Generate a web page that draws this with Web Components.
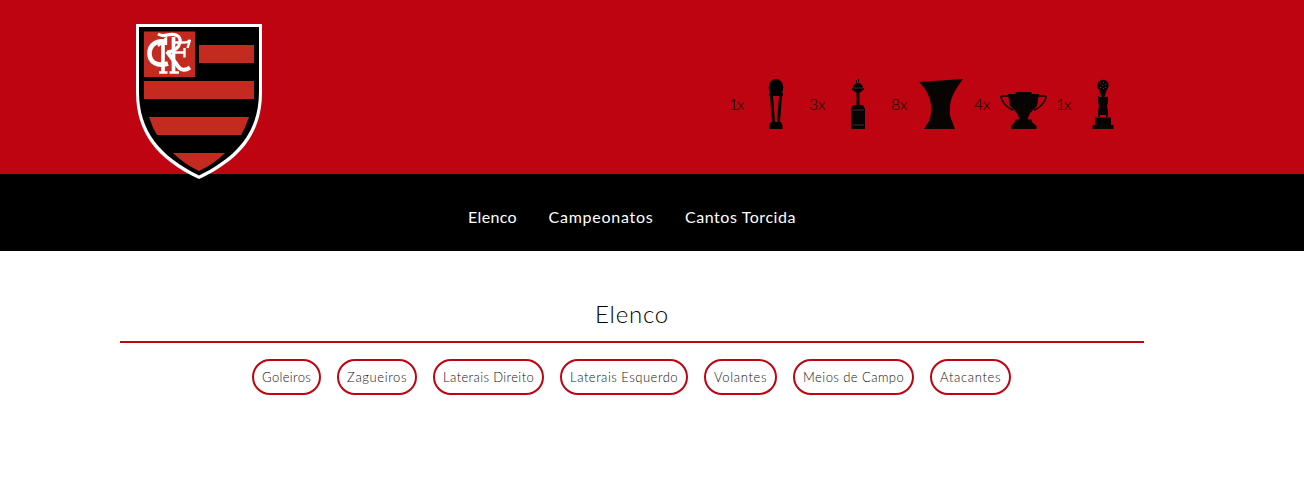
<!DOCTYPE html>
<html lang="pt-BR">
<head>
<meta charset="utf-8">
<title>Elenco</title>
<style>
html,body{margin:0;background:#fff;overflow:hidden}
body{font-family:Lato,"Open Sans",sans-serif;font-weight:300;color:#000}
</style>
</head>
<body>
<club-page></club-page>
<script>
const define = (name, html, ready) => {
  const tpl = document.createElement('template');
  tpl.innerHTML = html;
  customElements.define(name, class extends HTMLElement {
    connectedCallback() {
      if (this.shadowRoot) return;
      this.attachShadow({mode: 'open'}).append(tpl.content.cloneNode(true));
      if (ready) ready.call(this, this.shadowRoot);
    }
  });
};

/* Label tracked out so that its text spans the requested width. */
define('tracked-label', `<style>
:host{display:block;white-space:nowrap}
span{display:inline-block}
</style><span><slot></slot></span>`, function (root) {
  const span = root.querySelector('span');
  const w = +this.getAttribute('width');
  this.style.width = w + 'px';
  const extra = w - span.getBoundingClientRect().width;
  span.style.letterSpacing = extra / this.textContent.length + 'px';
});

define('club-crest', `<style>:host{display:block;width:126px;height:155px}svg{display:block}</style>
<svg width="126" height="155" viewBox="0 0 126 155">
<path fill="#fff" d="M0 0H126V68C126 108 106 135 63 155C20 135 0 108 0 68Z"/>
<path d="M3 3H123V68C123 106 103 132 63 151.500C23 132 3 106 3 68Z"/>
<g fill="#c42a20"><path d="M8 7.500H59V53H8ZM63 21H118V39H63ZM8 57H118V75H8ZM13 93H113Q110 103 105 111H21Q16 103 13 93ZM37 129H89Q78 140 63 147Q48 140 37 129Z"/></g>
<g fill="none" stroke="#fff" stroke-width="2.400">
<path stroke-width="4.600" d="M30 18.500C21 15 13.500 21 13.500 29.500C13.500 38 21 43 32 39.500"/>
<path stroke-width="3.200" d="M22 10Q26 12.500 31 11C39 9 45 12 44 18C43 24 38 27.500 31 28"/>
<path stroke-width="4" d="M31 27.500L41 41Q46 49 54 43.500"/>
<path stroke-width="3.700" d="M27 19V48M37.500 13V48"/>
<path d="M23 48.500H31.500M33.500 48.500H43M38 18.500H49Q52 18.500 54 16L51.500 24M38 28.500H48M48.500 24V33.500M22 22L30 14.500V21"/>
</g></svg>`);

define('trophy-item', `<style>
:host{display:flex;gap:8px;align-items:center;height:50px;font-size:16px;line-height:20px;color:#000}
svg{display:block;flex:none}
</style><slot></slot><svg width="50" height="50" viewBox="0 0 50 50" fill="#080404"></svg>`, function (root) {
  const art = {
    mundial: '<g fill="#000"><ellipse cx="25" cy="8.500" rx="7.300" ry="8.500"/><path d="M18 14H32V17H18ZM19 17H22L24 43H21ZM28 17H31L29 43H26ZM20 43H30L31.500 46V50H18.500V46Z"/></g>',
    libertadores: '<path d="M23 1H24V4H23ZM25 0H26V3H25ZM19 9H31V11H19ZM23.500 13H26.500V26H23.500ZM20 26H30L32 30V50H18V30Z"/><circle cx="25" cy="9" r="5"/><path stroke="#555" stroke-width=".6" d="M20 9H30M19 31H31M19 46H31"/>',
    brasileiro: '<path d="M4 3L48 0Q35 17 35 28Q34 37 37 42L40 50H9L14 42Q17 34 16 26Q15 14 4 3Z"/>',
    copa: '<path d="M17.500 13H33.500V15H41L39 27Q31 34 30 39V40.500H34V43L38.500 47V50H13V47L17 43V40.500H21V39Q20 34 12 27L10 15H17.500Z"/><path fill="none" stroke="#080404" stroke-width="1.700" d="M12 17H5Q2 17 3.500 20Q7 28 15 31M39 17H46Q49 17 47.500 20Q44 28 36 31"/>',
    sul: '<circle cx="25" cy="6.500" r="5.700"/><path d="M21 10H29L26.500 18H29V17H30V23L29 27L30 32V38H28V36H22V38H20V32L21 27L20 23V17H21V18H23.500ZM17 38.500H33V46H35.500V50H14.500V46H17Z"/><path fill="#802020" d="M22 4h1v1h-1ZM25 3h1v1h-1ZM27 5h1v1h-1ZM24 6h1v1h-1ZM22 8h1v1h-1ZM27 8h1v1h-1ZM25 9h1v1h-1Z"/>'
  };
  root.querySelector('svg').innerHTML = art[this.getAttribute('kind')];
});

define('nav-bar', `<style>
:host{display:block;background:#000;height:77px;color:#fff;font-size:16px;font-weight:400}
nav{display:flex;gap:31.5px;justify-content:center;width:1024px;margin-left:120px;padding-top:33px;line-height:20px}
</style><nav><slot></slot></nav>`);

define('filter-pill', `<style>
:host{display:block;box-sizing:border-box;height:36px;border:2px solid #be0411;border-radius:18px;padding:8px;font-size:13px;line-height:17px;color:#111}
</style><slot></slot>`);

define('club-page', `<style>
:host{display:block;height:478px}
header{height:174px;background:#be0411}
.in{display:flex;justify-content:space-between;width:979px;margin-left:136px;padding-top:24px}
club-crest{position:relative}
.cups{display:grid;grid-template-columns:80px 82px 83px 82px 59px;padding-top:55px}
main{width:1024px;margin-left:120px}
h1{display:flex;justify-content:center;font-size:24px;font-weight:300;line-height:30px;margin:0;padding:48px 0 12px;border-bottom:2px solid #be0411}
.pills{display:flex;gap:16px;justify-content:center;width:1023.2px;padding-top:16px}
</style>
<header><div class="in"><club-crest></club-crest>
<div class="cups">
<trophy-item kind="mundial"><tracked-label width="14">1x</tracked-label></trophy-item>
<trophy-item kind="libertadores"><tracked-label width="16">3x</tracked-label></trophy-item>
<trophy-item kind="brasileiro"><tracked-label width="16">8x</tracked-label></trophy-item>
<trophy-item kind="copa"><tracked-label width="16">4x</tracked-label></trophy-item>
<trophy-item kind="sul"><tracked-label width="14">1x</tracked-label></trophy-item>
</div></div></header>
<nav-bar><tracked-label width="49">Elenco</tracked-label><tracked-label width="105">Campeonatos</tracked-label><tracked-label width="111">Cantos Torcida</tracked-label></nav-bar>
<main><h1><tracked-label width="74">Elenco</tracked-label></h1>
<div class="pills">
<filter-pill><tracked-label width="49">Goleiros</tracked-label></filter-pill>
<filter-pill><tracked-label width="60">Zagueiros</tracked-label></filter-pill>
<filter-pill><tracked-label width="91">Laterais Direito</tracked-label></filter-pill>
<filter-pill><tracked-label width="108">Laterais Esquerdo</tracked-label></filter-pill>
<filter-pill><tracked-label width="53">Volantes</tracked-label></filter-pill>
<filter-pill><tracked-label width="101">Meios de Campo</tracked-label></filter-pill>
<filter-pill><tracked-label width="61">Atacantes</tracked-label></filter-pill>
</div></main>`);
</script>
</body>
</html>
